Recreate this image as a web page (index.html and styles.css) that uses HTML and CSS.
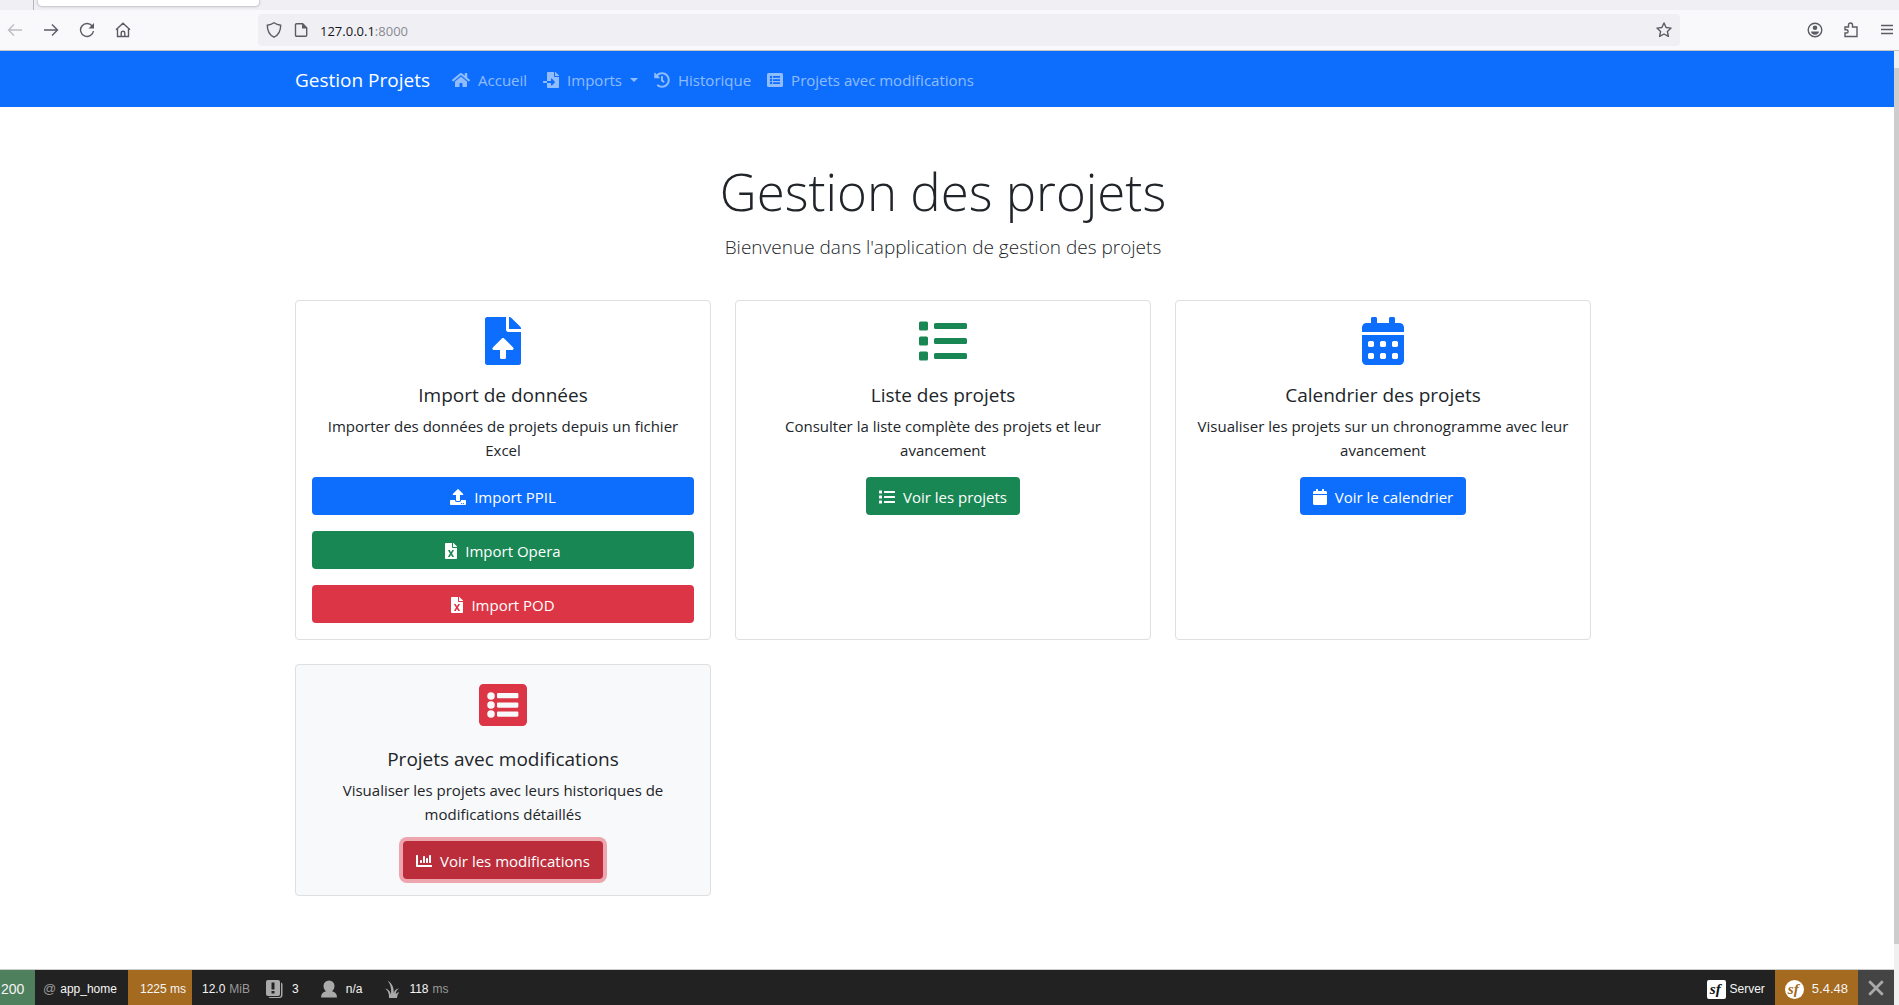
FILE: index.html
```html
<!DOCTYPE html>
<html lang="fr">
<head>
<meta charset="utf-8">
<meta name="viewport" content="width=device-width, initial-scale=1">
<title>Gestion des projets</title>
<link rel="stylesheet" href="styles.css">
</head>
<body>
<svg class="sprite" aria-hidden="true">
  <symbol id="i-home" viewBox="0 0 576 512"><path d="M280.37 148.26L96 300.11V464a16 16 0 0 0 16 16l112.06-.29a16 16 0 0 0 15.92-16V368a16 16 0 0 1 16-16h64a16 16 0 0 1 16 16v95.64a16 16 0 0 0 16 16.05L464 480a16 16 0 0 0 16-16V300L295.67 148.26a12.19 12.19 0 0 0-15.3 0zM571.6 251.47L488 182.56V44.05a12 12 0 0 0-12-12h-56a12 12 0 0 0-12 12v72.61L318.47 43a48 48 0 0 0-61 0L4.34 251.47a12 12 0 0 0-1.6 16.9l25.5 31A12 12 0 0 0 45.15 301l235.22-193.74a12.19 12.19 0 0 1 15.3 0L530.9 301a12 12 0 0 0 16.9-1.6l25.5-31a12 12 0 0 0-1.7-16.93z"/></symbol>
  <symbol id="i-import" viewBox="0 0 512 512"><path d="M16 288c-8.8 0-16 7.2-16 16v32c0 8.8 7.2 16 16 16h112v-64zm489-183L407.1 7c-4.5-4.5-10.6-7-17-7H384v128h128v-6.1c0-6.3-2.5-12.4-7-16.9zm-153 31V0H152c-13.3 0-24 10.7-24 24v264h128v-65.2c0-14.3 17.3-21.4 27.4-11.3L379 308c6.6 6.7 6.6 17.4 0 24l-95.7 96.4c-10.1 10.1-27.4 3-27.4-11.3V352H128v136c0 13.3 10.7 24 24 24h336c13.3 0 24-10.7 24-24V160H376c-13.2 0-24-10.8-24-24z"/></symbol>
  <symbol id="i-history" viewBox="0 0 512 512"><path d="M504 255.531c.253 136.64-111.18 248.372-247.82 248.468-59.015.042-113.223-20.53-155.822-54.911-11.077-8.94-11.905-25.541-1.839-35.607l11.267-11.267c8.609-8.609 22.353-9.551 31.891-1.984C173.062 425.135 212.781 440 256 440c101.705 0 184-82.311 184-184 0-101.705-82.311-184-184-184-48.814 0-93.149 18.969-126.068 49.932l50.754 50.754c10.08 10.08 2.941 27.314-11.313 27.314H24c-8.837 0-16-7.163-16-16V38.627c0-14.254 17.234-21.393 27.314-11.314l49.372 49.372C129.209 34.136 189.552 8 256 8c136.81 0 247.747 110.78 248 247.531zm-180.912 78.784l9.823-12.63c8.138-10.463 6.253-25.542-4.21-33.679L288 256.349V152c0-13.255-10.745-24-24-24h-16c-13.255 0-24 10.745-24 24v135.651l65.409 50.874c10.463 8.137 25.541 6.253 33.679-4.21z"/></symbol>
  <symbol id="i-listalt" viewBox="0 0 512 512"><path fill-rule="evenodd" d="M48 32h416a48 48 0 0 1 48 48v352a48 48 0 0 1-48 48H48a48 48 0 0 1-48-48V80a48 48 0 0 1 48-48zM128 120a40 40 0 1 0 0 80a40 40 0 1 0 0-80zM128 216a40 40 0 1 0 0 80a40 40 0 1 0 0-80zM128 312a40 40 0 1 0 0 80a40 40 0 1 0 0-80zM204 128h204a12 12 0 0 1 12 12v32a12 12 0 0 1-12 12H204a12 12 0 0 1-12-12v-32a12 12 0 0 1 12-12zM204 228h204a12 12 0 0 1 12 12v32a12 12 0 0 1-12 12H204a12 12 0 0 1-12-12v-32a12 12 0 0 1 12-12zM204 324h204a12 12 0 0 1 12 12v32a12 12 0 0 1-12 12H204a12 12 0 0 1-12-12v-32a12 12 0 0 1 12-12z"/></symbol>
  <symbol id="i-fileup" viewBox="0 0 384 512"><path d="M224 136V0H24C10.7 0 0 10.7 0 24v464c0 13.3 10.7 24 24 24h336c13.3 0 24-10.7 24-24V160H248c-13.2 0-24-10.8-24-24zm65.18 216.01H224v80c0 8.84-7.16 16-16 16h-32c-8.84 0-16-7.16-16-16v-80H94.82c-14.28 0-21.41-17.29-11.27-27.36l96.42-95.7c6.65-6.61 17.39-6.61 24.04 0l96.42 95.7c10.15 10.07 3.03 27.36-11.25 27.36zM377 105L279.1 7c-4.5-4.5-10.6-7-17-7H256v128h128v-6.1c0-6.3-2.5-12.4-7-16.9z"/></symbol>
  <symbol id="i-excel" viewBox="0 0 384 512"><path d="M224 136V0H24C10.7 0 0 10.7 0 24v464c0 13.3 10.7 24 24 24h336c13.3 0 24-10.7 24-24V160H248c-13.2 0-24-10.8-24-24zm60.1 106.5L224 336l60.1 93.5c5.1 8-.6 18.5-10.1 18.5h-34.9c-4.4 0-8.5-2.4-10.6-6.3C208.9 405.5 192 373 192 373c-6.4 14.8-10 20-36.6 68.8-2.1 3.9-6.1 6.3-10.5 6.3H110c-9.5 0-15.2-10.5-10.1-18.5l60.3-93.5-60.3-93.5c-5.2-8 .6-18.5 10.1-18.5h34.8c4.4 0 8.5 2.4 10.6 6.3 26.1 48.8 20 33.6 36.6 68.5 0 0 6.1-11.7 36.6-68.5 2.1-3.9 6.2-6.3 10.6-6.3H274c9.5-.1 15.2 10.4 10.1 18.4zM384 121.9v6.1H256V0h6.1c6.4 0 12.5 2.5 17 7l97.9 98c4.5 4.5 7 10.6 7 16.9z"/></symbol>
  <symbol id="i-upload" viewBox="0 0 512 512"><path d="M296 384h-80c-13.3 0-24-10.7-24-24V192h-87.7c-17.8 0-26.7-21.5-14.1-34.1L242.3 5.7c7.5-7.5 19.8-7.5 27.3 0l152.2 152.2c12.6 12.6 3.7 34.1-14.1 34.1H320v168c0 13.3-10.7 24-24 24zm216-8v112c0 13.3-10.7 24-24 24H24c-13.3 0-24-10.7-24-24V376c0-13.3 10.7-24 24-24h136v8c0 30.9 25.1 56 56 56h80c30.9 0 56-25.1 56-56v-8h136c13.3 0 24 10.7 24 24zm-124 88c0-11-9-20-20-20s-20 9-20 20 9 20 20 20 20-9 20-20zm64 0c0-11-9-20-20-20s-20 9-20 20 9 20 20 20 20-9 20-20z"/></symbol>
  <symbol id="i-list" viewBox="0 0 512 512"><rect y="48" width="96" height="96" rx="16"/><rect y="208" width="96" height="96" rx="16"/><rect y="368" width="96" height="96" rx="16"/><rect x="160" y="64" width="352" height="64" rx="16"/><rect x="160" y="224" width="352" height="64" rx="16"/><rect x="160" y="384" width="352" height="64" rx="16"/></symbol>
  <symbol id="i-calendar" viewBox="0 0 448 512"><path d="M400 64h-48V16c0-8.800-7.200-16-16-16h-32c-8.800 0-16 7.200-16 16v48H160V16c0-8.800-7.200-16-16-16h-32c-8.800 0-16 7.200-16 16v48H48C21.500 64 0 85.500 0 112v48h448v-48c0-26.500-21.500-48-48-48zM0 464c0 26.500 21.500 48 48 48h352c26.500 0 48-21.500 48-48V192H0z"/></symbol>
  <symbol id="i-calendaralt" viewBox="0 0 448 512"><path fill-rule="evenodd" d="M400 64h-48V16c0-8.800-7.200-16-16-16h-32c-8.800 0-16 7.200-16 16v48H160V16c0-8.800-7.200-16-16-16h-32c-8.800 0-16 7.200-16 16v48H48C21.500 64 0 85.500 0 112v48h448v-48c0-26.500-21.500-48-48-48zM0 464c0 26.500 21.500 48 48 48h352c26.500 0 48-21.500 48-48V192H0zM76 256h40l12 12v40l-12 12H76l-12-12v-40zM204 256h40l12 12v40l-12 12h-40l-12-12v-40zM332 256h40l12 12v40l-12 12h-40l-12-12v-40zM76 384h40l12 12v40l-12 12H76l-12-12v-40zM204 384h40l12 12v40l-12 12h-40l-12-12v-40zM332 384h40l12 12v40l-12 12h-40l-12-12v-40z"/></symbol>
  <symbol id="i-chart" viewBox="0 0 512 512"><path d="M16 64h32a16 16 0 0 1 16 16v304h432a16 16 0 0 1 16 16v32a16 16 0 0 1-16 16H32a32 32 0 0 1-32-32V80a16 16 0 0 1 16-16z"/><rect x="128" y="224" width="64" height="96" rx="13"/><rect x="224" y="96" width="64" height="224" rx="13"/><rect x="320" y="160" width="64" height="160" rx="13"/><rect x="416" y="64" width="64" height="256" rx="13"/></symbol>
</svg>

<header class="chrome">
  <div class="tabstrip"><span class="tab-rule"></span><span class="tab"></span></div>
  <div class="toolbar">
    <div class="nav-buttons">
      <button type="button" class="tool disabled" aria-label="Précédent"><svg viewBox="0 0 16 16"><path d="M15 8H1.500M7 2.500 1.500 8 7 13.500"/></svg></button>
      <button type="button" class="tool" aria-label="Suivant"><svg viewBox="0 0 16 16"><path d="M1 8h13.500M9 2.500 14.500 8 9 13.500"/></svg></button>
      <button type="button" class="tool" aria-label="Actualiser"><svg viewBox="0 0 16 16"><path d="M13.200 4A6.500 6.500 0 1 0 14.500 9"/><path class="solid" d="M15 1v5.500H9.500z"/></svg></button>
      <button type="button" class="tool" aria-label="Accueil du navigateur"><svg viewBox="0 0 16 16"><path d="M1 7.800 8 1.200l7 6.600M2.500 7v7.500h11V7M6.200 14.500V11a1.800 1.800 0 0 1 3.600 0v3.500"/></svg></button>
    </div>
    <div class="urlbar">
      <svg class="line-icon" viewBox="0 0 16 16"><path d="M8 .8c2 1.400 4.200 2.200 6.700 2.400C14.700 9 12.500 13 8 15.200 3.500 13 1.300 9 1.300 3.200 3.800 3 6 2.200 8 .8z"/></svg>
      <svg class="line-icon" viewBox="0 0 16 16"><path d="M3.500 1.700h6.200l4 4v7.600a1 1 0 0 1-1 1H3.500a1 1 0 0 1-1-1V2.700a1 1 0 0 1 1-1z"/><path class="solid" d="M9 1.500v5h5z"/></svg>
      <span class="url">127.0.0.1<span class="port">:8000</span></span>
      <button type="button" class="tool star" aria-label="Marquer cette page"><svg viewBox="0 0 16 16"><path stroke-linejoin="round" d="m8 1 2.100 4.500 5 .6-3.700 3.400 1 4.900L8 12l-4.400 2.400 1-4.900L.9 6.100l5-.6z"/></svg></button>
    </div>
    <div class="right-buttons">
      <button type="button" class="tool" aria-label="Compte"><svg viewBox="0 0 16 16"><circle cx="8" cy="8" r="6.800"/><circle class="solid" cx="8" cy="5.800" r="2.300"/><path class="solid" d="M4 9.500h8c0 2-1.800 3.200-4 3.200s-4-1.200-4-3.200z"/></svg></button>
      <button type="button" class="tool" aria-label="Extensions"><svg viewBox="0 0 16 16"><path d="M2 5h3.500V3a2 2 0 0 1 4 0v2H14v9.500H2V11h1.500a1.500 1.500 0 0 0 0-3.200H2z"/></svg></button>
      <button type="button" class="tool" aria-label="Menu"><svg viewBox="0 0 16 16"><path d="M2 3.500h12M2 7.500h12M2 11.500h12"/></svg></button>
    </div>
  </div>
</header>

<div class="viewport">
  <div class="page">
    <nav class="navbar">
      <div class="container navbar-inner">
        <a class="brand" href="#">Gestion Projets</a>
        <a class="nav-link" href="#"><svg class="icon wide"><use href="#i-home"/></svg>Accueil</a>
        <a class="nav-link dropdown" href="#"><svg class="icon"><use href="#i-import"/></svg>Imports</a>
        <a class="nav-link" href="#"><svg class="icon"><use href="#i-history"/></svg>Historique</a>
        <a class="nav-link" href="#"><svg class="icon"><use href="#i-listalt"/></svg>Projets avec modifications</a>
      </div>
    </nav>

    <main class="container main">
      <div class="hero">
        <h1>Gestion des projets</h1>
        <p>Bienvenue dans l'application de gestion des projets</p>
      </div>
      <div class="cards">
        <section class="card">
          <svg class="card-icon blue"><use href="#i-fileup"/></svg>
          <h2>Import de données</h2>
          <p>Importer des données de projets depuis un fichier Excel</p>
          <div class="stack">
            <a class="btn bg-blue" href="#"><svg class="icon"><use href="#i-upload"/></svg>Import PPIL</a>
            <a class="btn bg-green" href="#"><svg class="icon narrow"><use href="#i-excel"/></svg>Import Opera</a>
            <a class="btn bg-red" href="#"><svg class="icon narrow"><use href="#i-excel"/></svg>Import POD</a>
          </div>
        </section>
        <section class="card">
          <svg class="card-icon green"><use href="#i-list"/></svg>
          <h2>Liste des projets</h2>
          <p>Consulter la liste complète des projets et leur avancement</p>
          <a class="btn bg-green" href="#"><svg class="icon"><use href="#i-list"/></svg>Voir les projets</a>
        </section>
        <section class="card">
          <svg class="card-icon blue"><use href="#i-calendaralt"/></svg>
          <h2>Calendrier des projets</h2>
          <p>Visualiser les projets sur un chronogramme avec leur avancement</p>
          <a class="btn bg-blue" href="#"><svg class="icon mid"><use href="#i-calendar"/></svg>Voir le calendrier</a>
        </section>
        <section class="card light">
          <svg class="card-icon red"><use href="#i-listalt"/></svg>
          <h2>Projets avec modifications</h2>
          <p>Visualiser les projets avec leurs historiques de modifications détaillés</p>
          <a class="btn bg-red focused" href="#"><svg class="icon"><use href="#i-chart"/></svg>Voir les modifications</a>
        </section>
      </div>
    </main>

    <footer class="debugbar">
      <span class="block status">200</span>
      <span class="block route"><span class="muted at">@</span> app_home</span>
      <span class="block time">1225 ms</span>
      <span class="block memory">12.0 <span class="muted">MiB</span></span>
      <span class="block"><svg class="debug-icon" viewBox="0 0 18 20"><path d="M2 1h10a2 2 0 0 1 2 2v12a2 2 0 0 1-2 2H2a2 2 0 0 1-2-2V3a2 2 0 0 1 2-2z"/><path d="M15 3.500a2 2 0 0 1 1.500 2V16a3 3 0 0 1-3 3H4a2 2 0 0 1-1.500-1H13a2 2 0 0 0 2-2z"/><path class="cut" d="M5.500 3.500h3v7h-3zM5.500 12h3v2.500h-3z"/></svg>3</span>
      <span class="block spaced"><svg class="debug-icon" viewBox="0 0 18 20"><path d="M9 1.500a5.500 5.500 0 0 1 5.500 5.500c0 2.300-1 4-2.500 5.200 3 .8 5 2.600 5 6.300H1c0-3.700 2-5.500 5-6.300C4.500 11 3.500 9.300 3.500 7A5.500 5.500 0 0 1 9 1.500z"/></svg>n/a</span>
      <span class="block spaced"><svg class="debug-icon" viewBox="0 0 18 20"><path d="M6 19c.2-4-.5-7-4-9.500 3.500.8 5.500 3 6 6C8.500 10 8 6 4.500 1.500 9.500 4.500 11 9 10.800 14.500c.5-3 2-4.800 5.200-5-2.500 1.800-3.200 3.200-3.200 5.500 1-1.200 2-1.800 3.500-1.500-1.500 1.200-2 2.800-2.300 5.500z"/></svg>118 <span class="muted">ms</span></span>
      <span class="block server"><svg class="logo" viewBox="0 0 20 20"><rect class="logo-back" width="20" height="20" rx="2"/><text x="3" y="15">sf</text></svg>Server</span>
      <span class="block version"><svg class="logo" viewBox="0 0 20 20"><circle class="logo-back" cx="10" cy="10" r="10"/><text x="3" y="15">sf</text></svg>5.4.48</span>
      <button type="button" class="close" aria-label="Fermer"><svg viewBox="0 0 16 16"><path d="m2 2 12 12M14 2 2 14"/></svg></button>
    </footer>
  </div>
  <div class="scrollbar"><span class="thumb"></span></div>
</div>
</body>
</html>
```

FILE: styles.css
```css
* { box-sizing: border-box; }

body {
  margin: 0;
  min-height: 100vh;
  display: flex;
  flex-direction: column;
  background: #fff;
  color: #212529;
  font: 15px/24px "Open Sans", "Noto Sans", sans-serif;
}

h1, h2, p { margin: 0; }
a { color: inherit; text-decoration: none; }
.sprite { display: none; }

/* Browser window */
.chrome { border-bottom: 1px solid #c4c4c8; }

.tabstrip {
  display: flex;
  align-items: flex-start;
  gap: 4px;
  height: 10px;
  padding-left: 33px;
  background: #f0eff4;
}
.tab-rule { width: 1px; height: 10px; background: #b4b4bc; }
.tab {
  width: 221px;
  height: 6px;
  background: #fff;
  border-radius: 0 0 4px 4px;
  box-shadow: 0 0 3px rgba(0, 0, 0, .4);
}

.toolbar {
  display: flex;
  align-items: center;
  height: 40px;
  background: #f9f9fb;
}
.nav-buttons { display: flex; gap: 20px; width: 258px; padding-left: 7px; }
.tool {
  display: flex;
  padding: 0;
  border: 0;
  background: none;
  color: #5b5b66;
}
.tool svg, .line-icon {
  width: 16px;
  height: 16px;
  fill: none;
  stroke: currentColor;
  stroke-width: 1.4;
}
.tool .solid, .line-icon .solid { fill: currentColor; stroke: none; }
.tool.disabled { color: #bcbcc2; }

.urlbar {
  flex: 1;
  display: flex;
  align-items: center;
  height: 32px;
  padding: 0 8px;
  gap: 11px;
  border-radius: 4px;
  background: #f0f0f4;
  color: #5b5b66;
}
.url { flex: 1; padding-top: 1px; font-size: 13px; color: #15141a; }
.port { color: #8a8a92; }
.right-buttons { display: flex; gap: 20px; width: 219px; padding-right: 4px; justify-content: flex-end; }

/* Visible page area and its scroll bar */
.viewport { flex: 1; display: flex; }
.page { flex: 1; display: flex; flex-direction: column; }
.scrollbar {
  display: flex;
  width: 5px;
  padding: 17px 0 61px;
  background: #f0f0f0;
}
.thumb { flex: 1; background: #cdcdcd; }

.container {
  width: 100%;
  max-width: 1328px;
  margin: 0 auto;
  padding: 0 20px 0 12px;
}

.navbar { background: #0d6efd; }
.navbar-inner { display: flex; align-items: center; height: 56px; padding-top: 2px; }
.brand { margin-right: 14px; color: #fff; font-size: 19px; line-height: 30px; }
.nav-link {
  display: flex;
  align-items: center;
  gap: 8px;
  padding: 8px;
  color: rgba(255, 255, 255, .55);
}
.dropdown::after {
  content: "";
  border: 4px solid transparent;
  border-top-color: currentColor;
  border-bottom: 0;
}

.icon { width: 16px; height: 16px; fill: currentColor; }
.icon.wide { width: 18px; }
.icon.narrow { width: 12px; }
.icon.mid { width: 14px; }

/* Home page */
.main { padding-top: 51px; padding-bottom: 48px; }
.hero { margin-bottom: 38px; text-align: center; font-weight: 300; }
.hero h1 { margin-bottom: 7px; font-size: 51px; line-height: 67px; font-weight: 300; }
.hero p { font-size: 19px; line-height: 30px; }

.cards {
  display: grid;
  grid-template-columns: repeat(3, 1fr);
  gap: 24px;
}
.card {
  display: flex;
  flex-direction: column;
  align-items: center;
  padding: 16px;
  border: 1px solid #dfdfdf;
  border-radius: 4px;
  text-align: center;
}
.card.light { background: #f8f9fa; }
.card-icon { width: 48px; height: 48px; margin-bottom: 18px; fill: currentColor; }
.card h2 { margin-bottom: 7px; font-size: 19px; line-height: 24px; font-weight: 400; }
.card p { margin-bottom: 15px; }

.stack { display: flex; flex-direction: column; gap: 16px; width: 100%; }
.btn {
  display: flex;
  align-items: center;
  justify-content: center;
  gap: 8px;
  padding: 8px 13px 6px;
  border-radius: 4px;
  color: #fff;
}
.blue { color: #0d6efd; }
.green { color: #198754; }
.red { color: #dc3545; }
.bg-blue { background: #0d6efd; }
.bg-green { background: #198754; }
.bg-red { background: #dc3545; }
.bg-red.focused { background: #bb2d3b; box-shadow: 0 0 0 4px rgba(225, 83, 97, .5); }

/* Debug toolbar */
.debugbar {
  display: flex;
  margin-top: auto;
  height: 36px;
  border-top: 1px solid #ccc;
  background: #222;
  color: #f5f5f5;
  font: 12px/32px "Liberation Sans", Arial, sans-serif;
}
.block { display: flex; align-items: center; gap: 4px; padding: 3px 8px 0; white-space: nowrap; }
.muted { color: #999; }
.at { font-size: 13px; }
.block.status { width: 35px; padding-left: 1px; padding-right: 0; background: #4f805d; font-size: 14px; }
.route { width: 93px; }
.block.time { width: 64px; justify-content: flex-end; padding-right: 6px; background: #a46a1f; }
.block.memory { padding-left: 10px; }
.debug-icon { width: 18px; height: 20px; margin-right: 4px; fill: #aaa; }
.debug-icon .cut { fill: #222; }
.block.spaced { padding-left: 13px; }
.block.server { margin-left: auto; padding-right: 10px; }
.block.version { gap: 8px; padding-left: 10px; padding-right: 10px; background: #a46a1f; font-size: 13px; }
.logo { width: 19px; height: 19px; }
.logo-back { fill: #fff; }
.logo text { font: italic bold 16px "Liberation Serif", serif; fill: #111; }
.version .logo text { fill: #a46a1f; }
.close {
  display: flex;
  align-items: center;
  justify-content: center;
  width: 36px;
  padding: 0;
  border: 0;
  background: #444;
}
.close svg { width: 18px; height: 18px; stroke: #aaa; stroke-width: 2.5; }
```
